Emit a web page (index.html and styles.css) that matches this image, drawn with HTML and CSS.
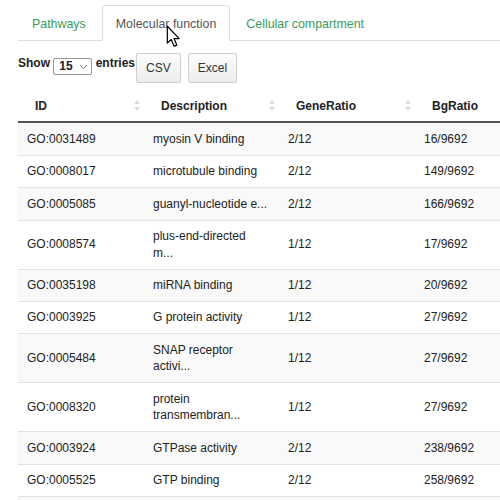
FILE: index.html
```html
<!DOCTYPE html>
<html>
<head>
<meta charset="utf-8">
<link rel="stylesheet" href="styles.css">
</head>
<body>
<div class="page">
  <ul class="tabs">
    <li class="tab">Pathways</li>
    <li class="tab active">Molecular function</li>
    <li class="tab">Cellular compartment</li>
  </ul>
  <div class="toolbar">
    <div class="length">Show <span class="select">15 <svg width="9" height="6" viewBox="0 0 9 6"><path d="M1 1 L4.5 4.5 L8 1" fill="none" stroke="#777" stroke-width="1"/></svg></span> entries</div>
    <button class="btn">CSV</button>
    <button class="btn">Excel</button>
  </div>
  <table class="grid">
    <colgroup>
      <col class="c1"><col class="c2"><col class="c3"><col class="c4">
    </colgroup>
    <thead>
      <tr>
        <th>ID<svg class="sort" width="6" height="11" viewBox="0 0 6 11"><path d="M3 0 L6 4 L0 4 Z M3 11 L6 7 L0 7 Z" fill="#ddd"/></svg></th>
        <th>Description<svg class="sort" width="6" height="11" viewBox="0 0 6 11"><path d="M3 0 L6 4 L0 4 Z M3 11 L6 7 L0 7 Z" fill="#ddd"/></svg></th>
        <th>GeneRatio<svg class="sort" width="6" height="11" viewBox="0 0 6 11"><path d="M3 0 L6 4 L0 4 Z M3 11 L6 7 L0 7 Z" fill="#ddd"/></svg></th>
        <th>BgRatio<svg class="sort" width="6" height="11" viewBox="0 0 6 11"><path d="M3 0 L6 4 L0 4 Z M3 11 L6 7 L0 7 Z" fill="#ddd"/></svg></th>
      </tr>
    </thead>
    <tbody>
      <tr><td>GO:0031489</td><td>myosin V binding</td><td>2/12</td><td>16/9692</td></tr>
      <tr><td>GO:0008017</td><td>microtubule binding</td><td>2/12</td><td>149/9692</td></tr>
      <tr><td>GO:0005085</td><td>guanyl-nucleotide e...</td><td>2/12</td><td>166/9692</td></tr>
      <tr><td>GO:0008574</td><td>plus-end-directed<br>m...</td><td>1/12</td><td>17/9692</td></tr>
      <tr><td>GO:0035198</td><td>miRNA binding</td><td>1/12</td><td>20/9692</td></tr>
      <tr><td>GO:0003925</td><td>G protein activity</td><td>1/12</td><td>27/9692</td></tr>
      <tr><td>GO:0005484</td><td>SNAP receptor<br>activi...</td><td>1/12</td><td>27/9692</td></tr>
      <tr><td>GO:0008320</td><td>protein<br>transmembran...</td><td>1/12</td><td>27/9692</td></tr>
      <tr><td>GO:0003924</td><td>GTPase activity</td><td>2/12</td><td>238/9692</td></tr>
      <tr><td>GO:0005525</td><td>GTP binding</td><td>2/12</td><td>258/9692</td></tr>
      <tr class="tail"><td></td><td></td><td></td><td></td></tr>
    </tbody>
  </table>
</div>
<svg class="cursor" width="16" height="23" viewBox="0 0 13 19"><path d="M1 1 L1 15 L4.2 12 L6.6 17.6 L8.8 16.6 L6.5 11.2 L10.8 11.2 Z" fill="#fff" stroke="#000" stroke-width="1" stroke-linejoin="round"/></svg>
</body>
</html>
```

FILE: styles.css
```css
html, body {
  margin: 0;
  padding: 0;
  overflow: hidden;
  background: #fff;
}
body {
  font-family: "Liberation Sans", Arial, sans-serif;
  font-size: 12px;
  color: #222;
}
.page {
  padding: 5px 0 0 18px;
  width: 560px;
}
.tabs {
  list-style: none;
  margin: 0;
  padding: 0;
  display: flex;
  gap: 2px;
  border-bottom: 1px solid #ddd;
  height: 35px;
}
.tab {
  padding: 0 13px;
  line-height: 36px;
  height: 35px;
  box-sizing: border-box;
  border: 1px solid transparent;
  border-radius: 4px 4px 0 0;
  color: #3a9b5c;
  font-size: 12.4px;
}
.tab.active {
  color: #555;
  border-color: #ddd;
  border-bottom-color: #fff;
  background: #fff;
  height: 36px;
}
.toolbar {
  display: flex;
  align-items: flex-start;
  margin-top: 12px;
}
.length {
  font-weight: bold;
  line-height: 18px;
  color: #222;
  margin-top: 1px;
  margin-right: 1px;
}
.select {
  display: inline-flex;
  align-items: center;
  justify-content: space-between;
  box-sizing: border-box;
  width: 39px;
  height: 17px;
  padding: 0 3px 0 5px;
  border: 1px solid #999;
  border-radius: 2px;
  vertical-align: -3px;
  line-height: 15px;
}
.btn {
  font-family: inherit;
  font-size: 12px;
  color: #333;
  height: 30px;
  padding: 0 9px;
  margin-right: 7px;
  border: 1px solid #cfcfcf;
  border-radius: 2px;
  background: linear-gradient(#fdfdfd, #ececec);
}
.grid {
  margin-top: 7px;
  border-collapse: collapse;
  table-layout: fixed;
  width: 533px;
}
.c1 { width: 126px; }
.c2 { width: 135px; }
.c3 { width: 136px; }
.c4 { width: 136px; }
th {
  text-align: left;
  font-weight: bold;
  padding: 0 4px 0 17px;
  height: 31px;
  line-height: 16px;
  border-bottom: 2px solid #555;
  color: #222;
}
.sort {
  float: right;
  margin-top: 2px;
}
td {
  padding: 7.4px 9px;
  line-height: 16.6px;
  border-top: 1px solid #e2e2e2;
  vertical-align: middle;
  color: #222;
}
tbody tr:first-child td { border-top: none; }
tbody tr:first-child td { padding-top: 8px; }
tbody tr:nth-child(odd) td { background: #f9f9f9; }
.tail td { height: 16.6px; }
.cursor {
  position: absolute;
  left: 166px;
  top: 25px;
}
```
